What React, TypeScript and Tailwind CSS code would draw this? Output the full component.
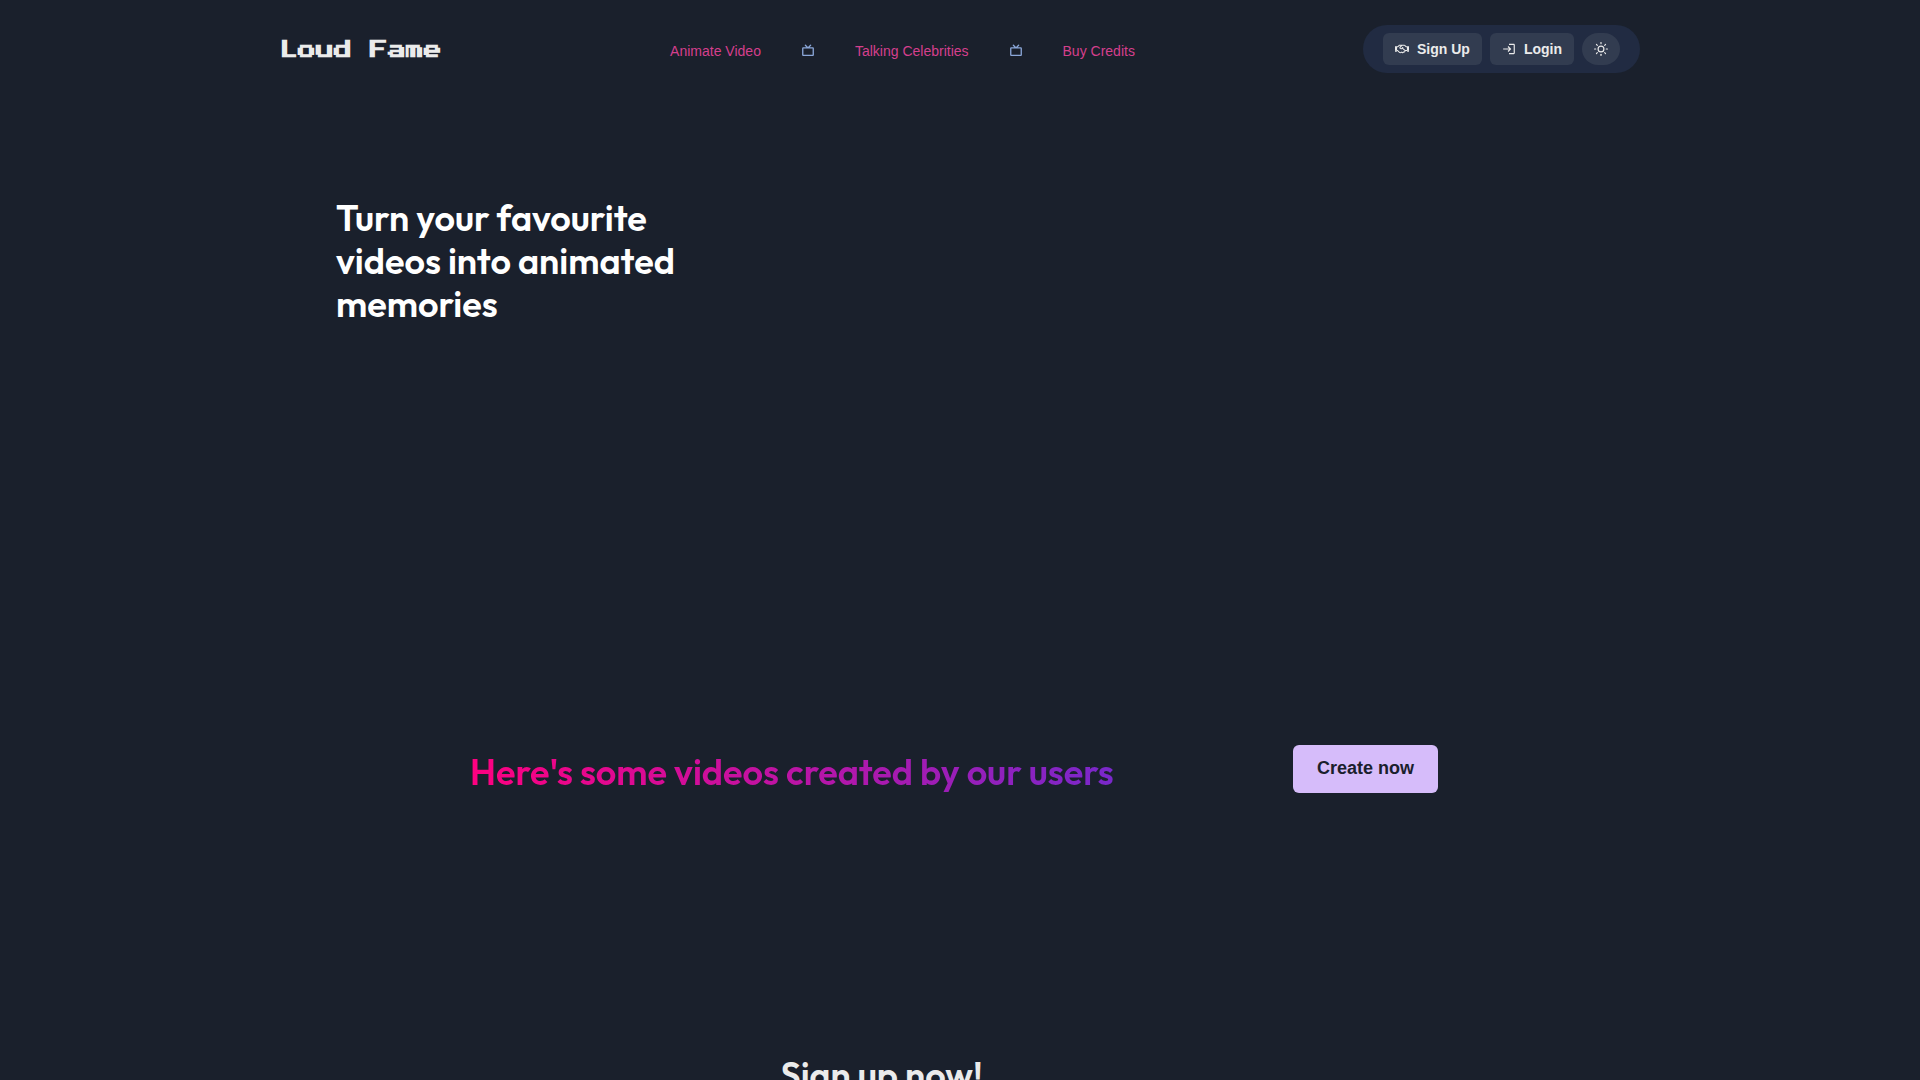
import { FaRegHandshake } from "react-icons/fa";
import { FiSun } from "react-icons/fi";
import { MdLogin } from "react-icons/md";
import { PiTelevisionSimpleBold } from "react-icons/pi";

const headingFont = "font-['Outfit','Lato',sans-serif] text-4xl/[43px] font-semibold";

const links = ["Animate Video", "Talking Celebrities", "Buy Credits"];

function Header() {
  return (
    <header className="mx-auto flex w-full max-w-[1360px] items-center justify-between pt-[25px]">
      <a
        href="#"
        className="pt-0.5 font-['Press_Start_2P','Liberation_Mono',monospace] text-lg font-bold text-[#ebebeb]"
      >
        Loud Fame
      </a>

      <nav className="flex items-center gap-10 px-[54px] pt-1 text-sm">
        {links.map((link, i) => (
          <div key={link} className="flex items-center gap-10">
            {i > 0 && <PiTelevisionSimpleBold className="size-3.5 text-[#8ba7d9]" />}
            <a href="#" className="text-[#d53f8c]">
              {link}
            </a>
          </div>
        ))}
      </nav>

      <div className="flex items-center gap-2 rounded-full bg-[#212b42] px-5 py-2 text-sm font-bold text-[#ebebeb]">
        <button className="flex h-8 items-center gap-2 rounded-md bg-[#323c50] px-3">
          <FaRegHandshake className="size-3.5" />
          Sign Up
        </button>
        <button className="flex h-8 items-center gap-2 rounded-md bg-[#323c50] px-3">
          <MdLogin className="size-3.5" />
          Login
        </button>
        <button
          aria-label="Toggle theme"
          className="flex h-8 items-center rounded-full bg-[#323c50] px-3"
        >
          <FiSun className="size-3.5" />
        </button>
      </div>
    </header>
  );
}

export default function App() {
  return (
    <div className="h-screen overflow-hidden bg-[#1a202c] font-['Liberation_Sans',Arial,sans-serif]">
      <Header />

      <main>
        {/* Hero */}
        <section className="mx-auto min-h-[672px] max-w-[1248px] pt-[123px]">
          <h1 className={`${headingFont} max-w-[360px] text-white`}>
            Turn your favourite videos into animated memories
          </h1>
        </section>

        {/* User videos */}
        <section className="mx-auto flex max-w-[980px] items-center justify-between pr-3">
          <h2
            className={`${headingFont} bg-linear-to-l/srgb from-[#7928ca] to-[#ff0080] bg-clip-text pt-1 text-transparent`}
          >
            Here's some videos created by our users
          </h2>
          <button className="h-12 rounded-md bg-[#d6bcfa] px-6 pb-0.5 text-lg font-bold text-[#1a202c]">
            Create now
          </button>
        </section>

        <section className="pt-[260px] pr-[157px] text-center">
          <h2 className={`${headingFont} text-[#ebebeb]`}>Sign up now!</h2>
        </section>
      </main>
    </div>
  );
}
